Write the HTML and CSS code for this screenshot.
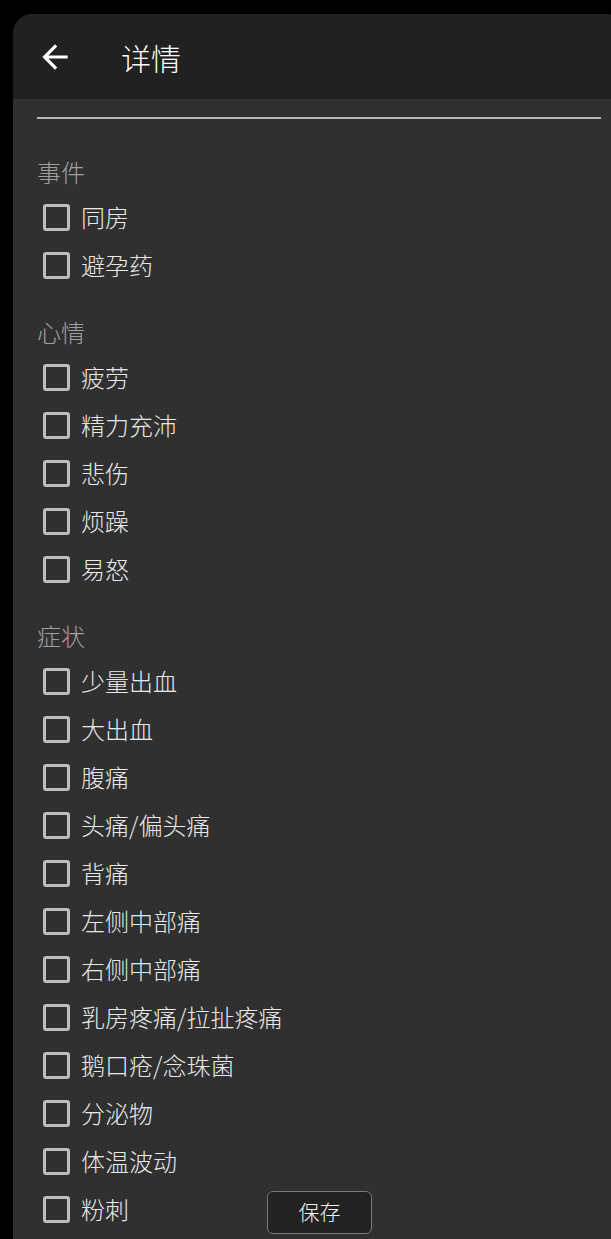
FILE: index.html
```html
<!DOCTYPE html>
<html lang="zh-CN">
<head>
  <meta charset="UTF-8">
  <title>详情</title>
  <meta name="viewport" content="width=device-width, initial-scale=1.0">
  <link rel="stylesheet" href="styles.css">
</head>
<body>

  <div class="sheet">
    <div class="topbar">
      <svg class="back" viewBox="0 0 24 24" width="38" height="38">
        <path fill="#ffffff" d="M20 11H7.83l5.59-5.59L12 4l-8 8 8 8 1.41-1.41L7.83 13H20v-2z"/>
      </svg>
      <h1>详情</h1>
    </div>

    <div class="content">
      <div class="divider"></div>

      <div class="group first">
        <div class="group-title">事件</div>
        <label class="item"><input type="checkbox"><span>同房</span></label>
        <label class="item"><input type="checkbox"><span>避孕药</span></label>
      </div>

      <div class="group">
        <div class="group-title">心情</div>
        <label class="item"><input type="checkbox"><span>疲劳</span></label>
        <label class="item"><input type="checkbox"><span>精力充沛</span></label>
        <label class="item"><input type="checkbox"><span>悲伤</span></label>
        <label class="item"><input type="checkbox"><span>烦躁</span></label>
        <label class="item"><input type="checkbox"><span>易怒</span></label>
      </div>

      <div class="group">
        <div class="group-title">症状</div>
        <label class="item"><input type="checkbox"><span>少量出血</span></label>
        <label class="item"><input type="checkbox"><span>大出血</span></label>
        <label class="item"><input type="checkbox"><span>腹痛</span></label>
        <label class="item"><input type="checkbox"><span>头痛/偏头痛</span></label>
        <label class="item"><input type="checkbox"><span>背痛</span></label>
        <label class="item"><input type="checkbox"><span>左侧中部痛</span></label>
        <label class="item"><input type="checkbox"><span>右侧中部痛</span></label>
        <label class="item"><input type="checkbox"><span>乳房疼痛/拉扯疼痛</span></label>
        <label class="item"><input type="checkbox"><span>鹅口疮/念珠菌</span></label>
        <label class="item"><input type="checkbox"><span>分泌物</span></label>
        <label class="item"><input type="checkbox"><span>体温波动</span></label>
        <label class="item"><input type="checkbox"><span>粉刺</span></label>
      </div>

      <button class="save" type="button">保存</button>
    </div>
  </div>

</body>
</html>
```

FILE: styles.css
```css
html, body {
  margin: 0;
  padding: 0;
  height: 100%;
}
body {
  background-color: #000;
  color: #e6e6e6;
  font-family: "Noto Sans CJK SC", "Noto Sans", sans-serif;
  font-weight: 300;
  overflow: hidden;
}
.sheet {
  margin: 14px 0 0 13px;
  width: 612px;
  height: 1225px;
  border-radius: 20px 20px 0 0;
  overflow: hidden;
  background: #303030;
}
.topbar {
  height: 85px;
  background: #212121;
  display: flex;
  align-items: center;
  padding-left: 23px;
}
.back {
  display: block;
  flex-shrink: 0;
}
.topbar h1 {
  margin: 0 0 0 47px;
  font-size: 30px;
  font-weight: 300;
  color: #fff;
  line-height: 40px;
}
.content {
  position: relative;
  padding: 18px 24px 0 24px;
}
.divider {
  height: 2px;
  background: #b8b8b8;
}
.group {
  margin-top: 22px;
}
.group.first {
  margin-top: 32px;
}
.group-title {
  height: 42px;
  line-height: 42px;
  font-size: 24px;
  color: #a0a0a0;
}
.item {
  display: flex;
  align-items: center;
  height: 48px;
  font-size: 24px;
  line-height: 48px;
  color: #e8e8e8;
}
.item input {
  appearance: none;
  -webkit-appearance: none;
  margin: 0 11px 0 6px;
  width: 27px;
  height: 27px;
  border: 3px solid #bdbdbd;
  border-radius: 3px;
  box-sizing: border-box;
  background: transparent;
}
.save {
  position: absolute;
  left: 254px;
  top: 1092px;
  width: 105px;
  height: 43px;
  border: 1.5px solid #7a7a7a;
  border-radius: 6px;
  background: #222;
  color: #f0f0f0;
  font-family: inherit;
  font-weight: 300;
  font-size: 21px;
  line-height: 36px;
  padding: 0 0 4px 0;
}
```
